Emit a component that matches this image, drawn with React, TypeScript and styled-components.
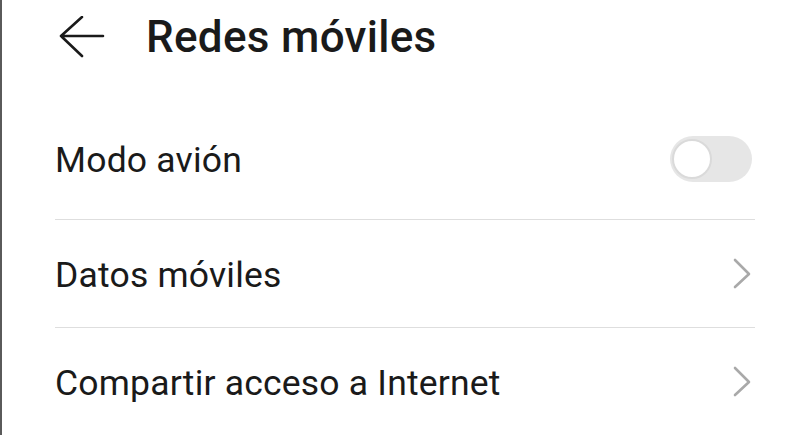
import { FC } from 'react'
import styled, { createGlobalStyle } from 'styled-components'

const GlobalStyle = createGlobalStyle`
  html, body {
    margin: 0;
    padding: 0;
    background: #ffffff;
  }
  body {
    font-family: Roboto, 'Noto Sans', 'Liberation Sans', sans-serif;
    color: #1a1a1a;
  }
`

type Item = {
  label: string
  kind: 'toggle' | 'link'
  height: number
}

const items: Item[] = [
  { label: 'Modo avión', kind: 'toggle', height: 120 },
  { label: 'Datos móviles', kind: 'link', height: 107 },
  { label: 'Compartir acceso a Internet', kind: 'link', height: 107 },
]

const BackArrow: FC = () => (
  <svg width="46" height="44" viewBox="0 0 46 44" fill="none">
    <path
      d="M2 20 H44 M23 1 L2 20 L23 40"
      stroke="#1a1a1a"
      strokeWidth="2.6"
      strokeLinecap="round"
      strokeLinejoin="round"
    />
  </svg>
)

const Chevron: FC = () => (
  <svg width="20" height="32" viewBox="0 0 20 32" fill="none">
    <path
      d="M3 2 L17 16 L3 29"
      stroke="#a9a9a9"
      strokeWidth="2.6"
      strokeLinecap="round"
      strokeLinejoin="round"
    />
  </svg>
)

const App: FC = () => {
  return (
    <Page>
      <GlobalStyle />
      <Header>
        <BackButton aria-label="Atrás">
          <BackArrow />
        </BackButton>
        <Title>Redes móviles</Title>
      </Header>
      <List>
        {items.map((item) => (
          <Row key={item.label} $height={item.height}>
            <Label>{item.label}</Label>
            {item.kind === 'toggle' ? (
              <Switch>
                <Knob />
              </Switch>
            ) : (
              <Chevron />
            )}
          </Row>
        ))}
      </List>
    </Page>
  )
}

const Page = styled.div`
  width: 800px;
  height: 435px;
  box-sizing: border-box;
  border-left: 2px solid #5a5a5a;
  overflow: hidden;
  display: flex;
  flex-direction: column;
`

const Header = styled.header`
  height: 76px;
  display: flex;
  align-items: center;
  padding-left: 57px;
`

const BackButton = styled.div`
  display: flex;
  align-items: center;
  width: 87px;
  margin-top: 1px;
`

const Title = styled.h1`
  margin: 0;
  font-size: 44px;
  font-weight: 500;
  letter-spacing: 0.3px;
  color: #1a1a1a;
`

const List = styled.div`
  margin-top: 25px;
  display: flex;
  flex-direction: column;
`

const Row = styled.div<{ $height: number }>`
  height: ${(p) => p.$height}px;
  margin: 0 45px 0 53px;
  padding-right: 3px;
  border-bottom: 1px solid #dedede;
  display: flex;
  align-items: center;
  justify-content: space-between;

  &:last-child {
    border-bottom: none;
  }
`

const Label = styled.span`
  font-size: 35.5px;
  font-weight: 400;
  letter-spacing: 0.2px;
  color: #1a1a1a;
  padding-top: 2px;
`

const Switch = styled.div`
  width: 82px;
  height: 46px;
  border-radius: 23px;
  background: #e6e6e6;
  display: flex;
  align-items: center;
  padding-left: 2px;
  box-sizing: border-box;
`

const Knob = styled.div`
  width: 40px;
  height: 40px;
  border-radius: 50%;
  background: #ffffff;
  border: 2px solid #dadada;
  box-sizing: border-box;
`

export default App
